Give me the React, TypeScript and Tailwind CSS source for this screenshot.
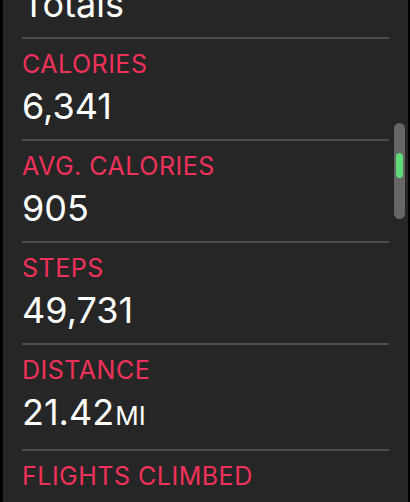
const font = { fontFamily: 'Inter, "Noto Sans", sans-serif' };

const stats = [
  { label: 'CALORIES', value: '6,341' },
  { label: 'AVG. CALORIES', value: '905' },
  { label: 'STEPS', value: '49,731' },
  { label: 'DISTANCE', value: '21.42', unit: 'MI' },
  { label: 'FLIGHTS CLIMBED', value: '12' },
];

const Stat = ({ label, value, unit }: { label: string; value: string; unit?: string }) => (
  <div className="flex flex-col">
    <div className="h-[2px] bg-[#4d4d4d]" />
    <div className="pt-[10px] pb-[13px]">
      <div className="text-[25px] leading-[30px] tracking-[0.5px] text-[#f0315a]">{label}</div>
      <div className="mt-[7px] text-[36px] leading-[40px] text-white">
        {value}
        {unit && <span className="text-[26px] ml-[1px]">{unit}</span>}
      </div>
    </div>
  </div>
);

export default function App() {
  return (
    <div className="w-[410px] h-[502px] bg-black overflow-hidden" style={font}>
      <div className="relative ml-[3px] w-[405px] h-full bg-[#262626] overflow-hidden">
        <div className="pl-[19px] pr-[19px]">
          <div className="-mt-[16px] pb-[13px] text-[36px] leading-[40px] text-white">Totals</div>
          {stats.map((s) => (
            <Stat key={s.label} {...s} />
          ))}
        </div>
        <div className="absolute left-[391px] top-[123px] w-[11px] h-[96px] rounded-full bg-[#666666]">
          <div className="absolute left-[2px] top-[30px] w-[7px] h-[25px] rounded-full bg-[#5fdc78]" />
        </div>
      </div>
    </div>
  );
}
